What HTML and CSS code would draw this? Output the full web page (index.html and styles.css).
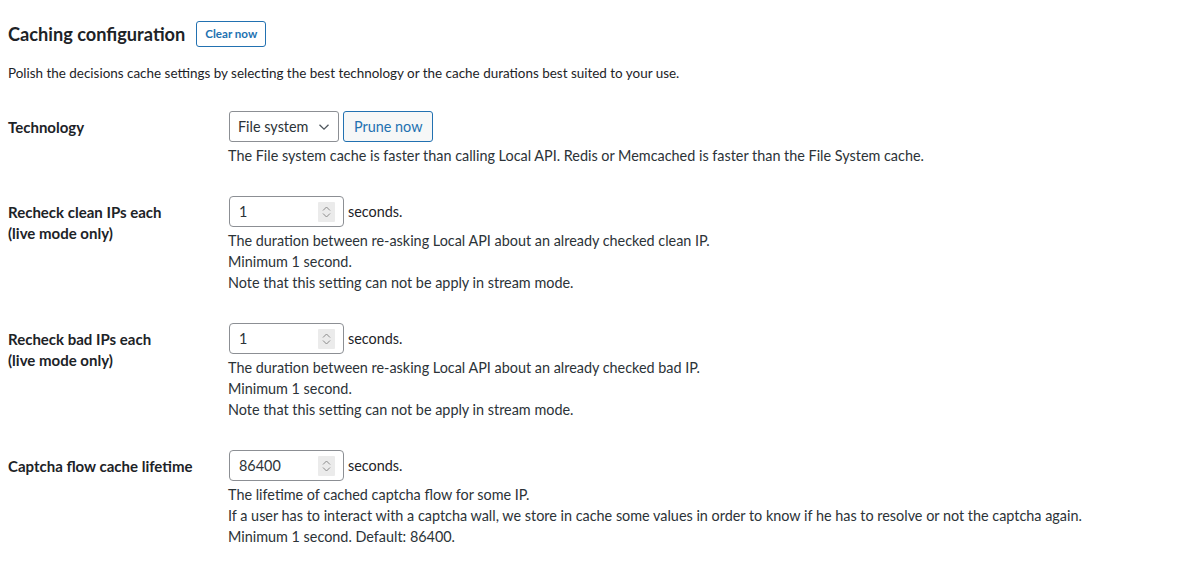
FILE: index.html
```html
<!DOCTYPE html>
<html lang="en">
<head>
<meta charset="utf-8">
<title>Caching configuration</title>
<link rel="stylesheet" href="styles.css">
</head>
<body>
<div class="wrap">
  <div class="section-head">
    <h2>Caching configuration</h2>
    <button class="btn btn-small" type="button">Clear now</button>
  </div>
  <p class="intro">Polish the decisions cache settings by selecting the best technology or the cache durations best suited to your use.</p>

  <table class="form-table">
    <tr>
      <th>Technology</th>
      <td>
        <div class="field-line">
          <span class="select-wrap">
            <select><option>File system</option></select>
            <svg class="chev" width="12" height="8" viewBox="0 0 12 8"><path d="M1.5 1.8 L6 6.2 L10.5 1.8" fill="none" stroke="#50575e" stroke-width="1.3"/></svg>
          </span>
          <button class="btn" type="button">Prune now</button>
        </div>
        <p class="description">The File system cache is faster than calling Local API. Redis or Memcached is faster than the File System cache.</p>
      </td>
    </tr>
    <tr>
      <th>Recheck clean IPs each<br>(live mode only)</th>
      <td>
        <div class="field-line">
          <span class="number-wrap">
            <input type="text" value="1">
            <svg class="spin" width="17" height="20" viewBox="0 0 17 20"><rect width="17" height="20" rx="1" fill="#ebebeb"/><path d="M5 8.5 L8.5 5 L12 8.5 M5 11.5 L8.5 15 L12 11.5" fill="none" stroke="#8a8a8a" stroke-width="1"/></svg>
          </span>
          <span class="unit">seconds.</span>
        </div>
        <p class="description">The duration between re-asking Local API about an already checked clean IP.<br>Minimum 1 second.<br>Note that this setting can not be apply in stream mode.</p>
      </td>
    </tr>
    <tr>
      <th>Recheck bad IPs each<br>(live mode only)</th>
      <td>
        <div class="field-line">
          <span class="number-wrap">
            <input type="text" value="1">
            <svg class="spin" width="17" height="20" viewBox="0 0 17 20"><rect width="17" height="20" rx="1" fill="#ebebeb"/><path d="M5 8.5 L8.5 5 L12 8.5 M5 11.5 L8.5 15 L12 11.5" fill="none" stroke="#8a8a8a" stroke-width="1"/></svg>
          </span>
          <span class="unit">seconds.</span>
        </div>
        <p class="description">The duration between re-asking Local API about an already checked bad IP.<br>Minimum 1 second.<br>Note that this setting can not be apply in stream mode.</p>
      </td>
    </tr>
    <tr>
      <th>Captcha flow cache lifetime</th>
      <td>
        <div class="field-line">
          <span class="number-wrap">
            <input type="text" value="86400">
            <svg class="spin" width="17" height="20" viewBox="0 0 17 20"><rect width="17" height="20" rx="1" fill="#ebebeb"/><path d="M5 8.5 L8.5 5 L12 8.5 M5 11.5 L8.5 15 L12 11.5" fill="none" stroke="#8a8a8a" stroke-width="1"/></svg>
          </span>
          <span class="unit">seconds.</span>
        </div>
        <p class="description">The lifetime of cached captcha flow for some IP.<br>If a user has to interact with a captcha wall, we store in cache some values in order to know if he has to resolve or not the captcha again.<br>Minimum 1 second. Default: 86400.</p>
      </td>
    </tr>
  </table>
</div>
</body>
</html>
```

FILE: styles.css
```css
* { box-sizing: border-box; }

html, body {
  margin: 0;
  background: #ffffff;
}

body {
  font-family: Lato, "Liberation Sans", sans-serif;
  font-size: 14.4px;
  color: #1d2327;
}

.wrap {
  padding: 0 8px;
}

.section-head {
  display: flex;
  align-items: center;
  gap: 11px;
  padding-top: 21px;
}

.section-head h2 {
  margin: 0;
  font-size: 18.2px;
  font-weight: 700;
  color: #1d2327;
}

.btn {
  font-family: inherit;
  font-size: 14.4px;
  color: #2271b1;
  background: #f6f7f7;
  border: 1px solid #2271b1;
  border-radius: 3px;
  height: 31px;
  padding: 0 10px;
  line-height: 29px;
  cursor: pointer;
}

.btn-small {
  height: 26px;
  line-height: 24px;
  font-size: 11.6px;
  font-weight: 700;
  padding: 0 8px;
  background: #ffffff;
}

.intro {
  margin: 16px 0 13px;
  font-size: 13.45px;
  line-height: 20px;
  color: #1d2327;
}

.form-table {
  border-collapse: collapse;
  border-spacing: 0;
}

.form-table th {
  width: 210px;
  padding: 20.5px 10px 20px 0;
  text-align: left;
  vertical-align: top;
  font-weight: 700;
  font-size: 15px;
  line-height: 21px;
}

.form-table td {
  padding: 15px 10px;
  vertical-align: top;
  line-height: 21px;
}

.field-line {
  display: flex;
  align-items: center;
  gap: 4px;
  height: 31px;
}

.select-wrap {
  position: relative;
  display: inline-flex;
  margin-left: 1px;
}

.select-wrap select {
  appearance: none;
  -webkit-appearance: none;
  font-family: inherit;
  font-size: 14.4px;
  color: #2c3338;
  width: 110px;
  height: 31px;
  padding: 0 24px 0 8px;
  border: 1px solid #8c8f94;
  border-radius: 3px;
  background: #ffffff;
}

.select-wrap .chev {
  position: absolute;
  right: 9px;
  top: 12px;
  pointer-events: none;
}

.number-wrap {
  display: inline-flex;
  align-items: center;
  width: 115px;
  height: 31px;
  margin-left: 1px;
  border: 1px solid #8c8f94;
  border-radius: 4px;
  background: #ffffff;
  padding: 0 8px 0 9px;
}

.number-wrap input {
  flex: 1;
  min-width: 0;
  border: none;
  outline: none;
  padding: 0;
  font-family: inherit;
  font-size: 14.4px;
  color: #2c3338;
  background: transparent;
}

.description {
  margin: 3px 0 0;
  font-size: 14.4px;
  line-height: 21px;
  color: #2c3338;
}
```
